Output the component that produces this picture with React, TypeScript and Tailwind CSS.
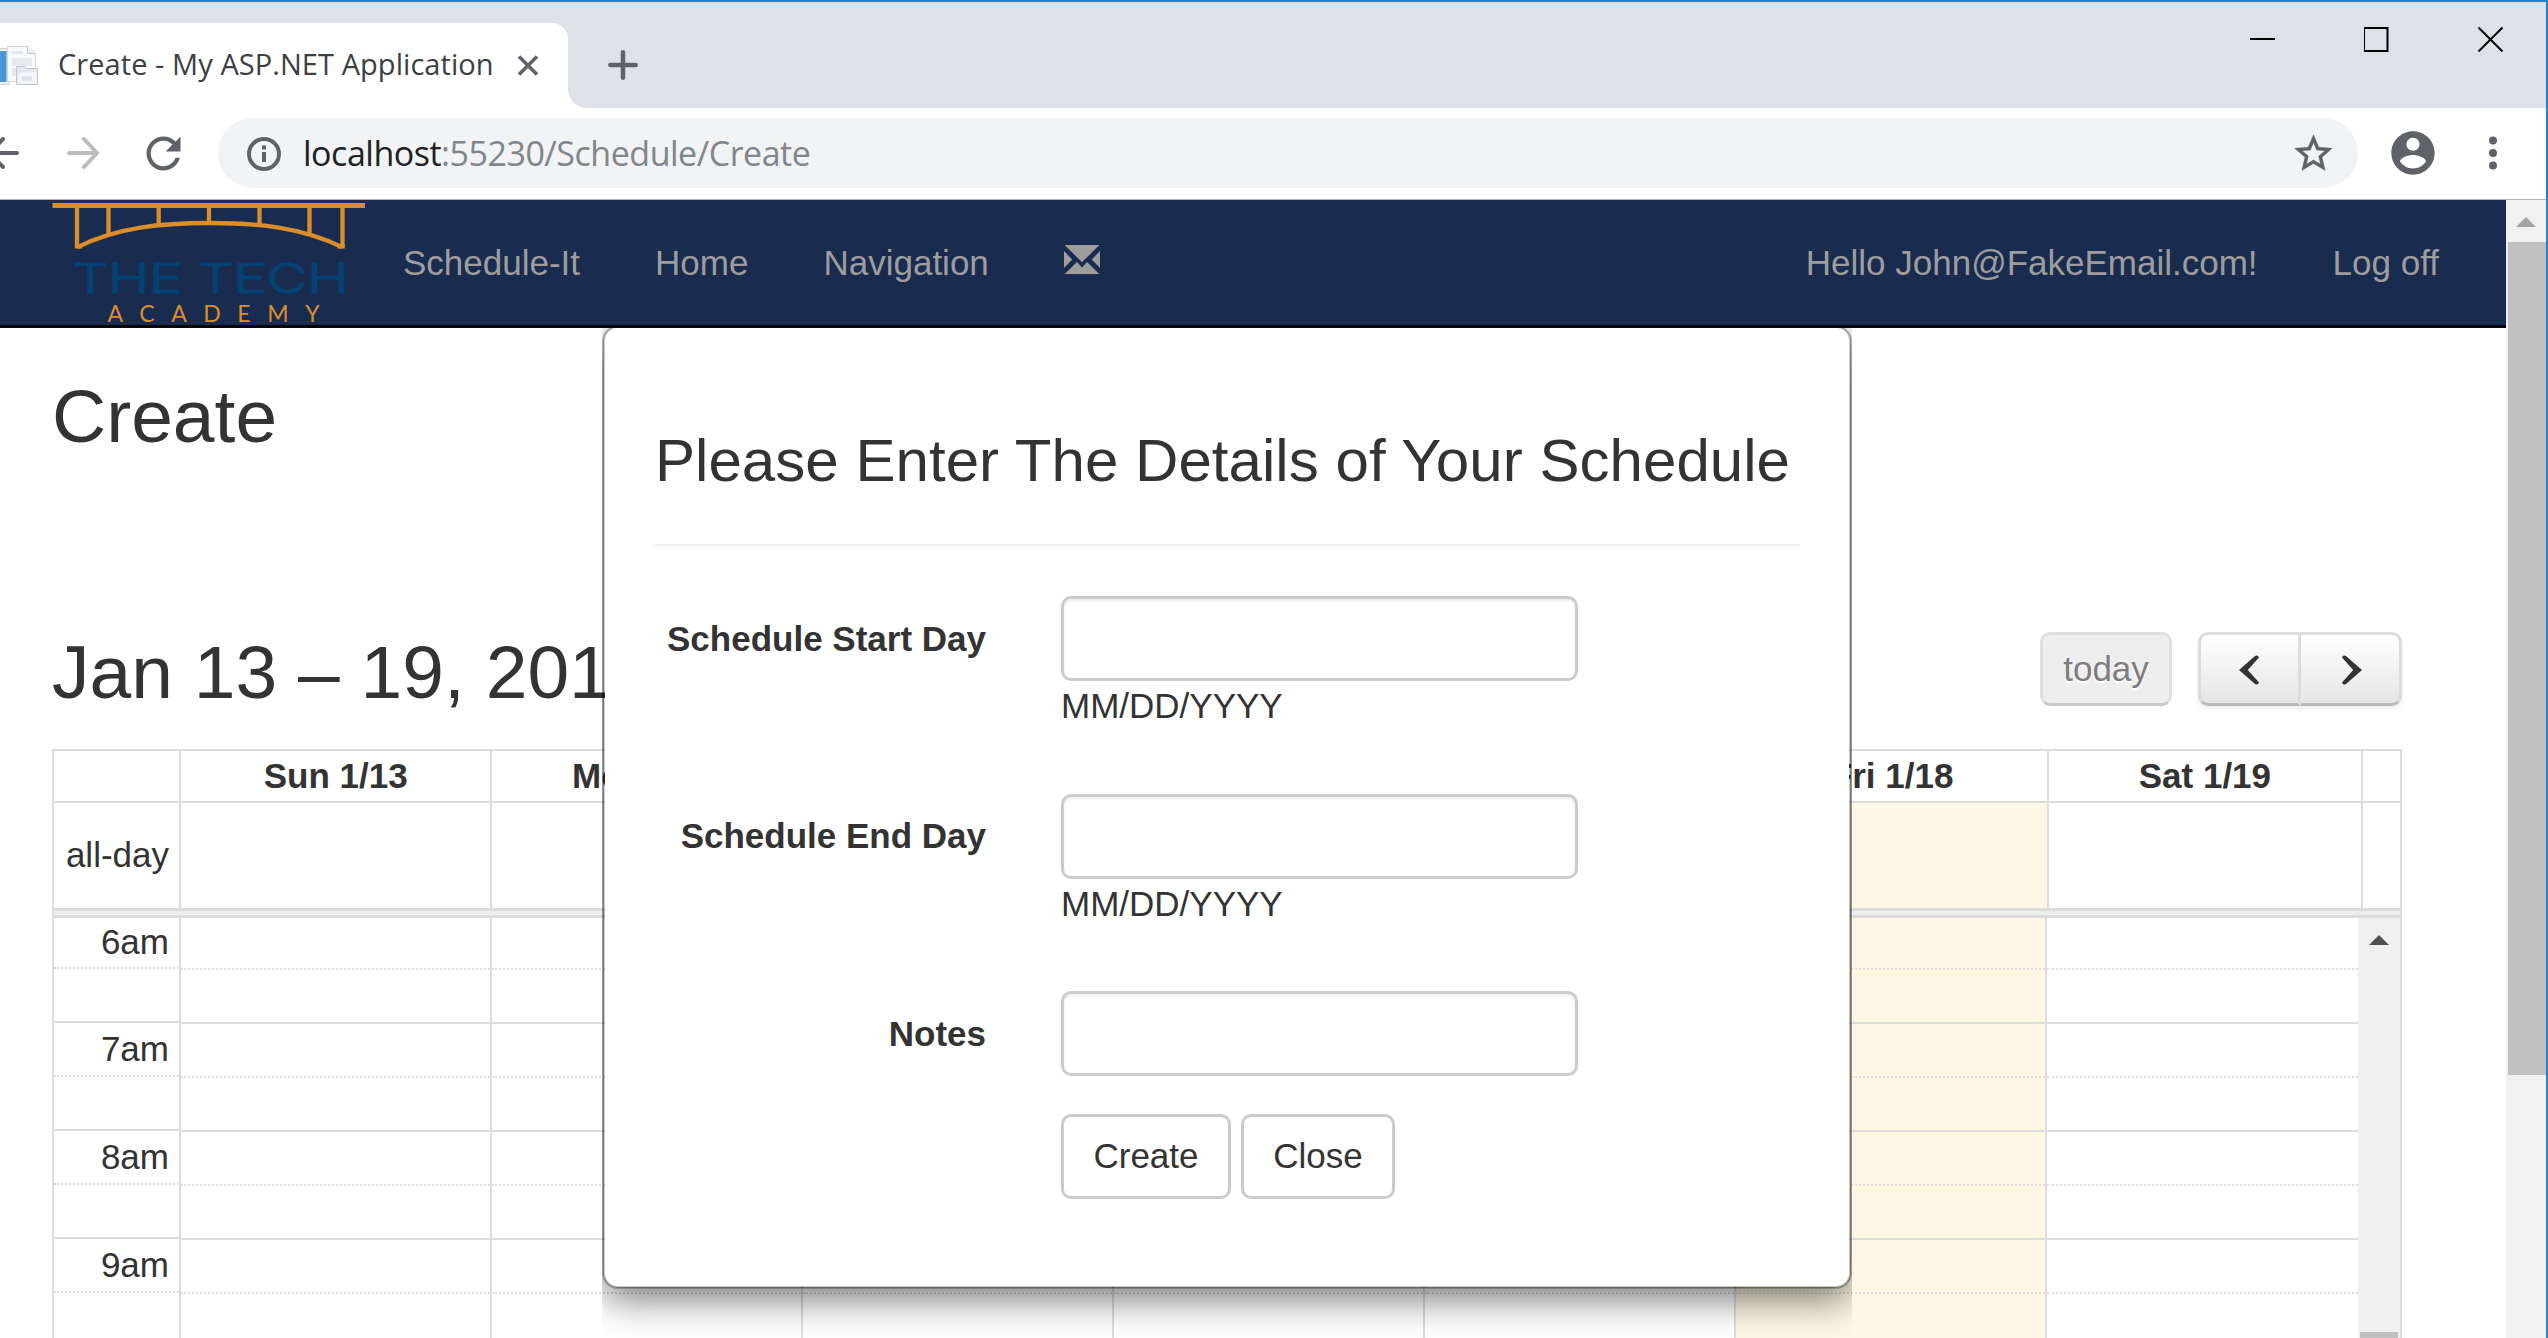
import React from "react";

const days = ["Sun 1/13", "Mon 1/14", "Tue 1/15", "Wed 1/16", "Thu 1/17", "Fri 1/18", "Sat 1/19"];
const hours = ["6am", "7am", "8am", "9am"];

function TabStrip() {
  return (
    <div className="flex h-[106px] shrink-0 bg-[#dee1e6]">
      <div className="relative mt-[21px] flex h-[85px] w-[568px] items-center rounded-tr-[16px] bg-white">
        <svg className="h-[40px] w-[38px] shrink-0" viewBox="0 0 38 40">
          <path d="M-1 2.500h10v36H-1z" fill="#eef1f4" stroke="#ccd2d8" />
          <path d="M0 5h6.500v31H0z" fill="#4a98d3" />
          <path d="M7.500 .5h20l8 7v28h-28z" fill="#f8f9fa" stroke="#d3d6da" />
          <path d="M27.500 .5v7h8" fill="#eceef0" stroke="#c3c8ce" />
          <path d="M12 5h11v3H12zM12 12h20v8H12zM12 22h4v8h-4z" fill="#e6e9ed" />
          <path d="M16.500 20.500h8l2 2h11v16h-21z" fill="#e3e7ed" stroke="#c2c8cf" />
          <path d="M18.500 26.500h18v11h-18z" fill="#f4f6f9" />
          <path d="M22 30h10v5H22z" fill="#e1e5ea" />
        </svg>
        <span className="relative -top-[2px] ml-[20px] w-[452px] whitespace-nowrap font-['Open_Sans','Noto_Sans',sans-serif] text-[29px] leading-[40px] tracking-[0.060px] text-[#3c4043]">
          Create - My ASP.NET Application
        </span>
        <svg className="ml-[7px] h-[22px] w-[22px] shrink-0" viewBox="0 0 22 22" stroke="#5f6368" strokeWidth="3.600">
          <path d="M2 1.500l18 18M20 1.500L2 19.500" />
        </svg>
        <svg className="absolute bottom-0 left-[568px] h-[20px] w-[20px]" viewBox="0 0 20 20" fill="#fff">
          <path d="M0 0v20h20C8 20 0 12 0 0z" />
        </svg>
      </div>
      <svg className="ml-[40px] mt-[48px] h-[30px] w-[30px]" viewBox="0 0 30 30" stroke="#5f6368" strokeWidth="4.500" strokeLinecap="round">
        <path d="M15 2.300v25.400M2.300 15h25.400" />
      </svg>
      <div className="ml-auto mr-[42px] mt-[24px] flex gap-[88px]">
        <svg className="h-[26px] w-[26px]" viewBox="0 0 26 26" stroke="#000" strokeWidth="2"><path d="M0 13h25" /></svg>
        <svg className="h-[26px] w-[26px]" viewBox="0 0 26 26" stroke="#000" strokeWidth="2" fill="none"><path d="M0 2h23.500v23H0z" /></svg>
        <svg className="h-[26px] w-[26px]" viewBox="0 0 26 26" stroke="#000" strokeWidth="2"><path d="M.5 1.500l24 24M24.500 1.500l-24 24" /></svg>
      </div>
    </div>
  );
}

function Toolbar() {
  return (
    <div className="flex h-[91px] shrink-0 items-center bg-white pb-px">
      <div className="flex w-[218px] shrink-0 items-center">
        <svg className="-ml-[13px] h-[32px] w-[32px]" viewBox="0 0 32 32" fill="none" stroke="#5f6368" strokeWidth="4" strokeLinecap="round"><path d="M30 16H3M16 2L2.500 16 16 30" /></svg>
        <svg className="ml-[48px] h-[32px] w-[32px]" viewBox="0 0 32 32" fill="none" stroke="#babcbe" strokeWidth="4" strokeLinecap="round"><path d="M2 16h27M17 2l13 14-13 14" /></svg>
        <svg className="ml-[39px] h-[51px] w-[51px]" viewBox="0 0 24 24" fill="#5f6368"><path d="M17.650 6.350C16.200 4.900 14.210 4 12 4c-4.420 0-7.990 3.580-7.990 8s3.570 8 7.990 8c3.730 0 6.840-2.550 7.730-6h-2.080c-.82 2.330-3.040 4-5.650 4-3.310 0-6-2.690-6-6s2.690-6 6-6c1.660 0 3.140.69 4.220 1.780L13 11h7V4l-2.350 2.350z" /></svg>
      </div>
      <div className="flex h-[70px] w-[2140px] shrink-0 items-center rounded-full bg-[#f1f3f4]">
        <svg className="ml-[29px] mt-px h-[34px] w-[34px]" viewBox="0 0 34 34" fill="none" stroke="#5f6368" strokeWidth="4"><circle cx="17" cy="17" r="15" /><path d="M17 8.500v4M17 15v10" /></svg>
        <span className="ml-[22px] whitespace-nowrap font-['Open_Sans','Noto_Sans',sans-serif] text-[34px] leading-[48px] tracking-[-0.480px] text-[#80868b]">
          <span className="text-[#202124]">localhost</span>:55230/Schedule/Create
        </span>
        <svg className="ml-auto mr-[22px] h-[45px] w-[45px]" viewBox="0 0 24 24" fill="#5f6368" stroke="#5f6368" strokeWidth=".25"><path d="M22 9.240l-7.190-.62L12 2 9.190 8.630 2 9.240l5.460 4.730L5.820 21 12 17.270 18.180 21l-1.630-7.030L22 9.240zM12 15.400l-3.760 2.270 1-4.280-3.320-2.880 4.380-.38L12 6.100l1.710 4.040 4.380.38-3.320 2.880 1 4.280L12 15.400z" /></svg>
      </div>
      <svg className="ml-[29px] h-[52px] w-[52px]" viewBox="0 0 24 24" fill="#5f6368"><path d="M12 2C6.480 2 2 6.480 2 12s4.480 10 10 10 10-4.480 10-10S17.520 2 12 2zm0 3c1.660 0 3 1.340 3 3s-1.340 3-3 3-3-1.340-3-3 1.340-3 3-3zm0 14.200c-2.500 0-4.710-1.280-6-3.220.03-1.990 4-3.080 6-3.080 1.990 0 5.970 1.090 6 3.080-1.290 1.940-3.500 3.220-6 3.220z" /></svg>
      <svg className="ml-[50px] h-[36px] w-[8px]" viewBox="0 0 8 36" fill="#5f6368"><circle cx="4" cy="5.500" r="4" /><circle cx="4" cy="18" r="4" /><circle cx="4" cy="30.500" r="4" /></svg>
    </div>
  );
}

function Logo() {
  return (
    <svg className="ml-[52px] h-[128px] w-[314px] shrink-0 overflow-visible" viewBox="52 200 314 128">
      <g fill="none" stroke="#d98e2b" strokeWidth="4.300">
        <path d="M52.500 205.500H365" strokeWidth="5" />
        <path d="M77 207V247M108.500 207V234M158.700 207V226M209 207V222M259.500 207V226M309.500 207V234M342.500 207V247" />
        <path d="M77 247.300C117 227 162 223 209.500 223S302 227 342.500 247.300" />
      </g>
      <path d="M74.900 244h6.500l1 4.500h-7.500zM344.700 244h-6.500l-1 4.500h7.500z" fill="#d98e2b" />
      <text x="72.500" y="292.500" textLength="276" lengthAdjust="spacingAndGlyphs" className="font-['Inter',sans-serif] text-[41px] font-light" fill="#044273" stroke="#044273" strokeWidth="1.200">THE TECH</text>
      <text x="107.500" y="322.200" textLength="212" lengthAdjust="spacing" className="font-['Lato',sans-serif] text-[23px]" fill="#d98e2b">ACADEMY</text>
    </svg>
  );
}

function NavBar() {
  return (
    <div className="relative z-20 flex h-[128px] shrink-0 border-b-[3px] border-[#050508] bg-[#1a2b50] text-[35px] leading-[50px] text-[#9d9d9d]">
      <Logo />
      <div className="ml-[37px] mt-[38px] flex gap-[75px] whitespace-nowrap">
        <span>Schedule-It</span>
        <span>Home</span>
        <span>Navigation</span>
        <svg className="mt-[7px] h-[29px] w-[36px]" viewBox="0 0 36 29" fill="#9d9d9d">
          <path d="M.7 0h34.600L18 17.300zM0 6l8.300 8.500L0 23zM36 6l-8.300 8.500L36 23zM.7 29l12.300-12 5 5.500 5-5.500 12.300 12z" />
        </svg>
      </div>
      <div className="ml-auto mr-[67px] mt-[38px] flex gap-[75px] whitespace-nowrap">
        <span>Hello John@FakeEmail.com!</span>
        <span>Log off</span>
      </div>
    </div>
  );
}

function CalendarHeader() {
  return (
    <div className="flex h-[74px] items-start">
      <h2 className="-mt-px whitespace-nowrap text-[75px] leading-[82px]">Jan 13 – 19, 2019</h2>
      <div className="ml-auto flex h-[74px]">
        <button className="w-[132px] rounded-[10px] border-[3px] border-[#e0e0e0] border-b-[#c8c8c8] bg-[#eee] text-[35px] leading-[60px] text-[#7d7d7d] [text-shadow:0_2px_2px_#fff]">
          today
        </button>
        <div className="ml-[26px] flex w-[204px] rounded-[10px] shadow-[0_3px_5px_rgba(0,0,0,0.07)]">
          <button className="flex w-[103px] items-center justify-center rounded-l-[10px] border-[3px] border-[#dcdcdc] border-b-[#b8b8b8] bg-linear-to-b from-white to-[#e6e6e6] pr-[2px] pt-px">
            <svg className="h-[30px] w-[20px]" viewBox="0 0 20 30" fill="#333"><path d="M0 15L16 1Q19-.5 20 2.500L8.800 15 20 27.500Q19 30.500 16 29z" /></svg>
          </button>
          <button className="flex w-[101px] items-center justify-center rounded-r-[10px] border-y-[3px] border-r-[3px] border-[#dcdcdc] border-b-[#b8b8b8] bg-linear-to-b from-white to-[#e6e6e6] pl-[4px] pt-px">
            <svg className="h-[30px] w-[20px]" viewBox="0 0 20 30" fill="#333"><path d="M20 15L4 1Q1-.5 0 2.500L11.200 15 0 27.500Q1 30.500 4 29z" /></svg>
          </button>
        </div>
      </div>
    </div>
  );
}

function Calendar() {
  return (
    <div className="mt-[43px] flex h-[640px] w-[2350px] flex-col overflow-hidden border-x-2 border-t-2 border-[#ddd] text-[35px] leading-[50px]">
      <div className="flex h-[52px] shrink-0 border-b-2 border-[#ddd] font-bold">
        <div className="w-[127px] shrink-0 border-r-2 border-[#ddd]" />
        <div className="grid w-[2182px] shrink-0 grid-cols-[repeat(6,311.300px)_1fr]">
          {days.map((d) => (
            <div key={d} className="whitespace-nowrap border-r-2 border-[#ddd] text-center">{d}</div>
          ))}
        </div>
      </div>
      <div className="flex h-[105px] shrink-0">
        <div className="flex w-[127px] shrink-0 items-center justify-end border-r-2 border-[#ddd] pb-px pr-[10px]">all-day</div>
        <div className="grid w-[2182px] shrink-0 grid-cols-[repeat(6,311.300px)_1fr]">
          {days.map((d, i) => (
            <div key={d} className={i === 5 ? "border-r-2 border-[#ddd] bg-[#fcf8e3]" : "border-r-2 border-[#ddd]"} />
          ))}
        </div>
      </div>
      <div className="h-[10px] shrink-0 border-y-[3px] border-[#dcdcdc] bg-[#eee]" />
      <div className="flex grow">
        <div className="grid w-[2304px] shrink-0 grid-cols-[127px_repeat(7,311px)]">
          {["axis", ...days].map((d, i) => (
            <div key={d} className={i === 6 ? "overflow-hidden border-r-2 border-[#ddd] bg-[#fcf8e3]" : i === 7 ? "overflow-hidden" : "overflow-hidden border-r-2 border-[#ddd]"}>
              {hours.map((h, r) => (
                <div key={h}>
                  <div className={r === 0 ? "h-[50px] pr-[10px] text-right" : "h-[54px] border-t-2 border-[#ddd] pr-[10px] text-right"}>
                    {i === 0 && <div className={r === 0 ? "-mt-px" : "pt-px"}>{h}</div>}
                  </div>
                  <div className="h-[54px] border-t-2 border-dotted border-[#ddd]" />
                </div>
              ))}
            </div>
          ))}
        </div>
        <div className="flex w-[42px] flex-col items-center bg-[#f0f0f0]">
          <svg className="mt-[17px] h-[10px] w-[20px]" viewBox="0 0 20 10" fill="#505050"><path d="M10 0l10 10H0z" /></svg>
          <div className="mt-[387px] h-[10px] w-[38px] bg-[#c1c1c1]" />
        </div>
      </div>
    </div>
  );
}

function Field({ label, hint }: { label: string; hint?: string }) {
  return (
    <div className="flex h-[197.500px]">
      <label className="mt-[17.500px] w-[331px] text-right font-bold">{label}</label>
      <div className="ml-[75px]">
        <input className="block h-[85px] w-[517px] rounded-[10px] border-[3px] border-[#ccc] bg-white px-7 shadow-[inset_0_2px_3px_rgba(0,0,0,0.075)] outline-none" />
        {hint && <div>{hint}</div>}
      </div>
    </div>
  );
}

function Modal() {
  return (
    <div className="absolute left-[602px] top-[126px] z-10 h-[1012px] w-[1250px] overflow-hidden px-px">
      <div className="h-[962px] rounded-[15px] border-2 border-black/20 bg-white bg-clip-padding px-[50px] text-[35px] leading-[50px] shadow-[0_0_0_1px_rgba(0,0,0,0.2),0_12px_37px_rgba(0,0,0,0.5)]">
        <h4 className="mt-[100px] whitespace-nowrap text-[60px] leading-[66px] tracking-[0.050px]">Please Enter The Details of Your Schedule</h4>
        <div className="mt-[50px] h-[2px] w-[1145px] bg-[#eee]" />
        <div className="mt-[50px] h-[518px]">
          <Field label="Schedule Start Day" hint="MM/DD/YYYY" />
          <Field label="Schedule End Day" hint="MM/DD/YYYY" />
          <Field label="Notes" />
        </div>
        <div className="ml-[406px] flex gap-[10px]">
          <button className="h-[85px] w-[170px] rounded-[10px] border-[3px] border-[#ccc] bg-white pb-px">Create</button>
          <button className="h-[85px] w-[154px] rounded-[10px] border-[3px] border-[#ccc] bg-white pb-px">Close</button>
        </div>
      </div>
    </div>
  );
}

function PageScrollbar() {
  return (
    <div className="flex w-[40px] shrink-0 flex-col items-center bg-[#f1f1f1]">
      <svg className="mt-[17px] h-[10px] w-[20px]" viewBox="0 0 20 10" fill="#a3a3a3"><path d="M10 0l10 10H0z" /></svg>
      <div className="mt-[15px] h-[833px] w-[38px] self-end bg-[#c1c1c1]" />
    </div>
  );
}

export default function App() {
  return (
    <div className="flex h-[1338px] w-[2548px] flex-col overflow-hidden border-r-2 border-t-2 border-[#1883d7] bg-white font-['Liberation_Sans',Arial,sans-serif] text-[#333]">
      <TabStrip />
      <Toolbar />
      <div className="h-px shrink-0 bg-[#b5b5b5]" />
      <div className="flex h-[1138px] shrink-0">
        <div className="relative flex w-[2506px] shrink-0 flex-col overflow-hidden">
          <NavBar />
          <main className="ml-[52px] w-[2350px]">
            <h2 className="mt-[47px] text-[75px] leading-[82px]">Create</h2>
            <div className="mt-[175px]">
              <CalendarHeader />
            </div>
            <Calendar />
          </main>
          <Modal />
        </div>
        <PageScrollbar />
      </div>
    </div>
  );
}
